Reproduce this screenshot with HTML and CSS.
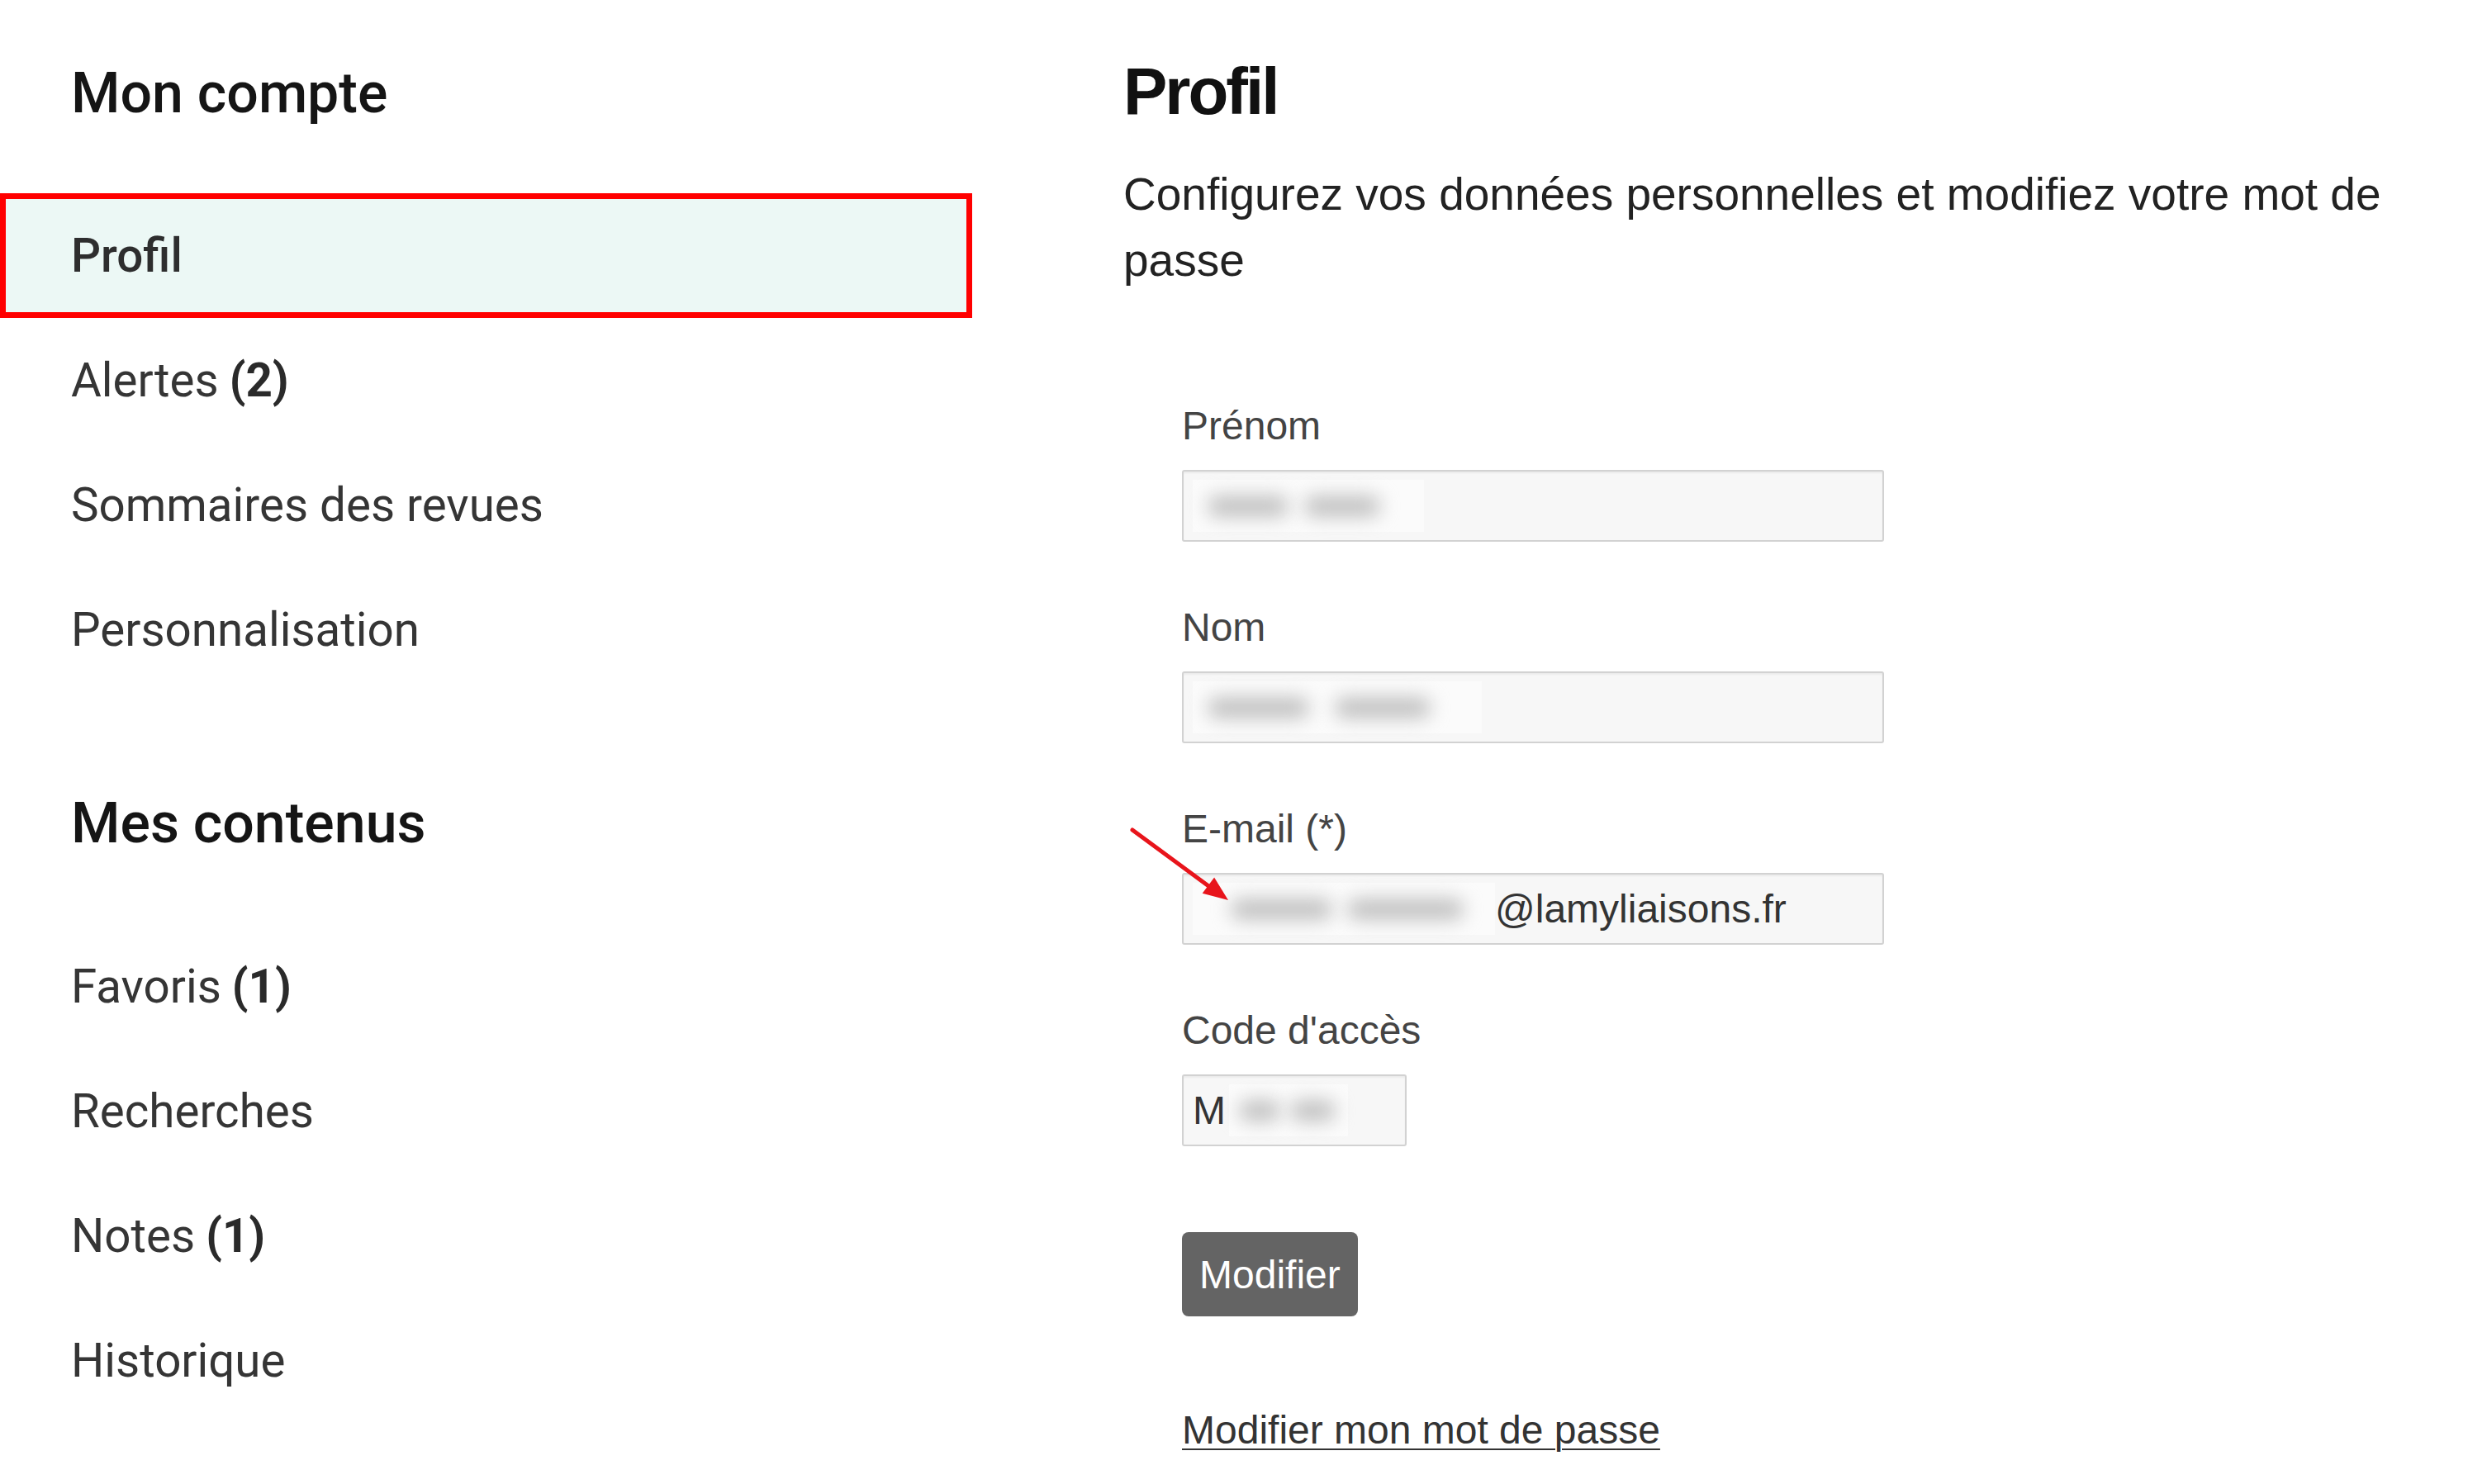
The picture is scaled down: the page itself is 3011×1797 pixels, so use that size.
FILE: index.html
```html
<!DOCTYPE html>
<html lang="fr">
<head>
<meta charset="utf-8">
<title>Mon compte – Profil</title>
<link rel="stylesheet" href="styles.css">
</head>
<body>
<div class="page">
  <aside class="sidebar">
    <h2 class="side-title">Mon compte</h2>
    <ul class="nav">
      <li><a class="nav-item active" href="#">Profil</a></li>
      <li><a class="nav-item" href="#">Alertes <b>(2)</b></a></li>
      <li><a class="nav-item" href="#">Sommaires des revues</a></li>
      <li><a class="nav-item" href="#">Personnalisation</a></li>
    </ul>
    <h2 class="side-title second">Mes contenus</h2>
    <ul class="nav">
      <li><a class="nav-item" href="#">Favoris <b>(1)</b></a></li>
      <li><a class="nav-item" href="#">Recherches</a></li>
      <li><a class="nav-item" href="#">Notes <b>(1)</b></a></li>
      <li><a class="nav-item" href="#">Historique</a></li>
    </ul>
  </aside>

  <main class="main">
    <h1 class="title">Profil</h1>
    <p class="lead">Configurez vos données personnelles et modifiez votre mot de passe</p>

    <form class="form">
      <div class="group">
        <label class="label">Prénom</label>
        <div class="field wide">
          <span class="redact r-prenom"><span class="blob b1"></span><span class="blob b2"></span></span>
        </div>
      </div>

      <div class="group">
        <label class="label">Nom</label>
        <div class="field wide">
          <span class="redact r-nom"><span class="blob b1"></span><span class="blob b2"></span></span>
        </div>
      </div>

      <div class="group email-group">
        <label class="label">E-mail (*)</label>
        <div class="field wide">
          <span class="redact r-email"><span class="blob b1"></span><span class="blob b2"></span></span><span class="value">@lamyliaisons.fr</span>
        </div>
        <svg class="arrow" width="124" height="92" viewBox="1367 1000 124 92" aria-hidden="true">
          <line x1="1371" y1="1005" x2="1466" y2="1075" stroke="#e8141b" stroke-width="5" stroke-linecap="round"/>
          <polygon points="1487,1090 1455.7,1081.7 1470.1,1062.5" fill="#e8141b"/>
        </svg>
      </div>

      <div class="group last">
        <label class="label">Code d'accès</label>
        <div class="field short">
          <span class="value">M</span><span class="redact r-code"><span class="blob b1"></span><span class="blob b2"></span></span>
        </div>
      </div>

      <button type="button" class="btn">Modifier</button>
      <a class="pw-link" href="#">Modifier mon mot de passe</a>
    </form>
  </main>
</div>
</body>
</html>
```

FILE: styles.css
```css
* { box-sizing: border-box; }

html, body {
  margin: 0;
  padding: 0;
  background: #ffffff;
}

.page {
  display: flex;
  gap: 183px;
}

/* ---------- Sidebar ---------- */
.sidebar {
  width: 1177px;
  flex: none;
  padding-top: 73px;
  font-family: Roboto, "Noto Sans", Arial, sans-serif;
}

.side-title {
  margin: 0 0 81px;
  padding-left: 86px;
  font-size: 68px;
  line-height: 80px;
  font-weight: 500;
  color: #151515;
}

.side-title.second {
  margin-top: 119px;
  margin-bottom: 82px;
}

.nav {
  list-style: none;
  margin: 0;
  padding: 0;
}

.nav-item {
  display: flex;
  align-items: center;
  height: 151px;
  padding-left: 86px;
  font-size: 56.5px;
  font-weight: 400;
  color: #353535;
  text-decoration: none;
}

.nav-item b {
  font-weight: 700;
  margin-left: 13px;
  color: #2a2a2a;
}

.nav-item.active {
  height: 151px;
  padding-left: 79px;
  background: #ecf8f5;
  border: 7px solid #ff0000;
  font-weight: 500;
  color: #2e2e2e;
}

/* ---------- Main ---------- */
.main {
  flex: 1;
  font-family: "Liberation Sans", Arial, sans-serif;
}

.title {
  margin: 66px 0 0;
  font-size: 80px;
  line-height: 90px;
  font-weight: 700;
  letter-spacing: -3px;
  color: #111111;
}

.lead {
  margin: 39px 0 0;
  max-width: 1580px;
  font-size: 55px;
  line-height: 80px;
  color: #222222;
}

.form {
  margin-top: 131px;
  padding-left: 71px;
}

.group {
  margin-bottom: 74px;
}

.group.last {
  margin-bottom: 104px;
}

.email-group {
  position: relative;
}

.label {
  display: block;
  margin-bottom: 23px;
  font-size: 48px;
  line-height: 60px;
  color: #444444;
}

.field {
  display: flex;
  align-items: center;
  height: 87px;
  padding-left: 11px;
  background: #f7f7f7;
  border: 2px solid #d2d2d2;
  border-radius: 3px;
  box-shadow: inset 0 2px 2px rgba(0, 0, 0, 0.05);
  font-size: 48px;
  color: #333333;
  overflow: hidden;
}

.field.wide { width: 850px; }
.field.short { width: 272px; }

.value {
  white-space: nowrap;
}

/* blurred (redacted) personal data */
.redact {
  display: flex;
  align-items: center;
  height: 63px;
  background: #fbfbfb;
  flex: none;
}

.blob {
  display: block;
  height: 26px;
  border-radius: 13px;
  background: #c2c2c2;
  filter: blur(11px);
}

.r-prenom { width: 280px; }
.r-prenom .b1 { margin-left: 18px; width: 98px; }
.r-prenom .b2 { margin-left: 19px; width: 92px; }

.r-nom { width: 350px; }
.r-nom .b1 { margin-left: 18px; width: 123px; }
.r-nom .b2 { margin-left: 31px; width: 116px; }

.r-email { width: 366px; }
.r-email .b1 { margin-left: 46px; width: 123px; }
.r-email .b2 { margin-left: 18px; width: 141px; }

.r-code { width: 144px; margin-left: 4px; }
.r-code .b1 { margin-left: 12px; width: 50px; }
.r-code .b2 { margin-left: 12px; width: 55px; }

/* annotation arrow */
.arrow {
  position: absolute;
  left: -64px;
  top: 26px;
  overflow: visible;
}

.btn {
  display: block;
  height: 102px;
  padding: 0 21px;
  margin: 0 0 108px;
  background: #646464;
  color: #ffffff;
  border: none;
  border-radius: 8px;
  font-family: "Liberation Sans", Arial, sans-serif;
  font-size: 48px;
  cursor: pointer;
}

.pw-link {
  display: inline-block;
  font-size: 48px;
  line-height: 60px;
  color: #333333;
  text-decoration: underline;
  text-decoration-thickness: 2px;
  text-underline-offset: 6px;
}
```
